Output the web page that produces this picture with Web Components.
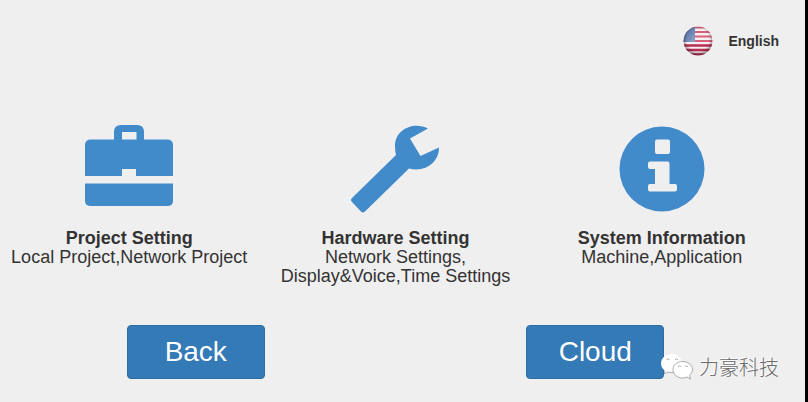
<!DOCTYPE html>
<html lang="en">
<head>
<meta charset="utf-8">
<title>Settings</title>
<style>
  html {
    height: 100%;
    background: #000;
  }

  body {
    margin: 0;
    min-height: 100%;
    display: flex;
    font-family: "Liberation Sans", "Noto Sans CJK SC", sans-serif;
    color: #333;
  }
</style>
</head>
<body>
<settings-screen>
  <language-button slot="header">English</language-button>

  <menu-tile icon="briefcase">
    <span slot="title">Project Setting</span>
    Local Project,Network Project
  </menu-tile>
  <menu-tile icon="wrench">
    <span slot="title">Hardware Setting</span>
    Network Settings,<br>Display&amp;Voice,Time Settings
  </menu-tile>
  <menu-tile icon="info">
    <span slot="title">System Information</span>
    Machine,Application
  </menu-tile>

  <action-button slot="actions">Back</action-button>
  <action-button slot="actions">Cloud</action-button>

  <brand-mark slot="brand">力豪科技</brand-mark>
</settings-screen>

<script>
// Page frame: header on top, a row of tiles, a row of buttons
class SettingsScreen extends HTMLElement {
  constructor () {
    super()
    this.attachShadow({ mode: 'open' })
    this.shadowRoot.innerHTML = `
    <style>
      :host {
        display: block;
        flex: 1;
        box-sizing: border-box;
        position: relative;
        margin-right: 3px;
        background: #f0eff0;
      }

      header {
        display: flex;
        justify-content: flex-end;
        padding: 26px 26px 0 0;
      }

      main, footer {
        display: grid;
        gap: 16px;
        padding: 0 18px 0 4px;
      }

      main {
        grid-template-columns: repeat(3, minmax(0, 1fr));
        margin-top: 69px;
      }

      footer {
        grid-template-columns: repeat(2, minmax(0, 1fr));
        justify-items: center;
        margin-top: 39px;
        padding-bottom: 20px;
      }

      /* The brand lies over the corner of the last button */
      .brand {
        position: absolute;
        right: 26px;
        bottom: 20px;
      }
    </style>
    <header><slot name="header"></slot></header>
    <main><slot></slot></main>
    <footer><slot name="actions"></slot></footer>
    <div class="brand"><slot name="brand"></slot></div>
    `
  }
}

class LanguageButton extends HTMLElement {
  constructor () {
    super()
    this.attachShadow({ mode: 'open' })
    this.shadowRoot.innerHTML = `
    <style>
      :host {
        display: block;
      }

      button {
        display: flex;
        align-items: center;
        gap: 15px;
        padding: 0;
        border: none;
        background: none;
        color: inherit;
        font: bold 14px/20px "Liberation Sans", sans-serif;
        cursor: pointer;
      }

      svg {
        width: 30px;
        height: 30px;
      }
    </style>
    <button type="button">
      <svg viewBox="0 0 30 30" aria-hidden="true">
        <defs>
          <clipPath id="round"><circle cx="15" cy="15" r="14.5"/></clipPath>
          <radialGradient id="shade" cx=".5" cy=".45" r=".55">
            <stop offset=".7" stop-color="#301020" stop-opacity="0"/>
            <stop offset="1" stop-color="#301020" stop-opacity=".5"/>
          </radialGradient>
          <linearGradient id="canton" x1="0" y1="0" x2="1" y2="1">
            <stop offset="0" stop-color="#3f5f9a"/>
            <stop offset="1" stop-color="#92a5cb"/>
          </linearGradient>
        </defs>
        <g clip-path="url(#round)">
          <rect width="30" height="30" fill="#f6eef0"/>
          <path d="M0 1.500h30M0 6h30M0 10.500h30M0 15h30" stroke="#d4607a" stroke-width="2"/>
          <path d="M0 19.500h30M0 24h30M0 28.500h30" stroke="#b52f50" stroke-width="2.300"/>
          <rect width="12" height="16" fill="url(#canton)"/>
          <circle cx="15" cy="15" r="14.500" fill="url(#shade)"/>
        </g>
      </svg>
      <slot></slot>
    </button>
    `
  }
}

// Drawings for the tiles, all on an 88 x 88 grid
const tileIcons = {
  briefcase: `
    <path fill-rule="evenodd" d="M0 51V20q0-5.500 6-5.500h23V7q0-7 7-7h16q7 0 7 7v7.500h23q6 0 6 5.500v31H51v-7H37v7zM37 7v7.500h14.500V7z"/>
    <path d="M0 58.500h88V76q0 5-6 5H6q-6 0-6-5z"/>`,
  wrench: `
    <path d="M77 3.500C63-4 44 4 44 21q0 5 1 9L1 73q-2 2 0 4l9 9.500q2 2 4 0L58 43.500c15 4 30-5 30-21L69.500 31 59 13.500z"/>`,
  info: `
    <path fill-rule="evenodd" d="M44 1.500a42.500 42.500 0 1 0 0 85a42.500 42.500 0 1 0 0-85zM39 14.500h11q2 0 2 2v10.500q0 2-2 2H39q-2 0-2-2V16.500q0-2 2-2zM32 36.500h17.500q2 0 2 2v20.500H57q2 0 2 2v3.500q0 2-2 2H32q-2 0-2-2v-3.500q0-2 2-2h5V44h-5q-2 0-2-2v-3.500q0-2 2-2z"/>`
}

class MenuTile extends HTMLElement {
  constructor () {
    super()
    this.attachShadow({ mode: 'open' })
    this.shadowRoot.innerHTML = `
    <style>
      :host {
        display: block;
        text-align: center;
        font-size: 18px;
        line-height: 19px;
      }

      a {
        display: block;
        color: inherit;
        text-decoration: none;
      }

      svg {
        display: block;
        width: 88px;
        height: 88px;
        margin: 0 auto 16px;
        fill: #428bca;
      }

      h2, p {
        margin: 0;
        font-size: inherit;
      }
    </style>
    <a href="#">
      <svg viewBox="0 0 88 88" aria-hidden="true"></svg>
      <h2><slot name="title"></slot></h2>
      <p><slot></slot></p>
    </a>
    `
  }

  connectedCallback () {
    const icon = this.getAttribute('icon')
    this.shadowRoot.querySelector('svg').innerHTML = tileIcons[icon] || ''
    this.shadowRoot.querySelector('a').setAttribute('href', '#' + icon)
  }
}

class ActionButton extends HTMLElement {
  constructor () {
    super()
    this.attachShadow({ mode: 'open' })
    this.shadowRoot.innerHTML = `
    <style>
      :host {
        display: block;
      }

      button {
        min-width: 138px;
        padding: 10px 24px;
        border: 1px solid #2e6da4;
        border-radius: 4px;
        background: #337ab7;
        color: #fff;
        font: 28px/32px "Liberation Sans", sans-serif;
        cursor: pointer;
      }
    </style>
    <button type="button"><slot></slot></button>
    `
  }
}

class BrandMark extends HTMLElement {
  constructor () {
    super()
    this.attachShadow({ mode: 'open' })
    this.shadowRoot.innerHTML = `
    <style>
      :host {
        display: flex;
        align-items: center;
        gap: 6px;
        color: #6a6a6a;
        font: 300 20px/30px "Noto Sans CJK SC", sans-serif;
        text-shadow: -1px -1px 0 #fff;
      }

      svg {
        width: 32px;
        height: 28px;
        fill: #fff;
        stroke: #777;
        stroke-width: .6;
      }
    </style>
    <svg viewBox="0 0 32 28" aria-hidden="true">
      <path stroke="none" d="M11 1C5 1 0 5 0 10.500c0 3 1.500 5.500 4 7L3 21l4-2q3 1 6 .5L21 9C20 4 16 1 11 1z"/>
      <path fill="none" d="M4 17.500L3 21l4-2q3 1 6 .5M5.500 6.500q1.500-1 3 0M14 6.500q1.500-1 3 0"/>
      <path d="M21.500 8.500c-5.500 0-9.500 3.500-9.500 8s4 8.500 9.500 8.500q2.500 0 4.500-1l3.500 2-1-3.500q3-2.500 3-6c0-4.500-4.500-8-10-8z"/>
      <path fill="none" d="M17 13.500q1.500-1 3 0M24 13.500q1.500-1 3 0"/>
    </svg>
    <slot></slot>
    `
  }
}

customElements.define('settings-screen', SettingsScreen)
customElements.define('language-button', LanguageButton)
customElements.define('menu-tile', MenuTile)
customElements.define('action-button', ActionButton)
customElements.define('brand-mark', BrandMark)
</script>
</body>
</html>
